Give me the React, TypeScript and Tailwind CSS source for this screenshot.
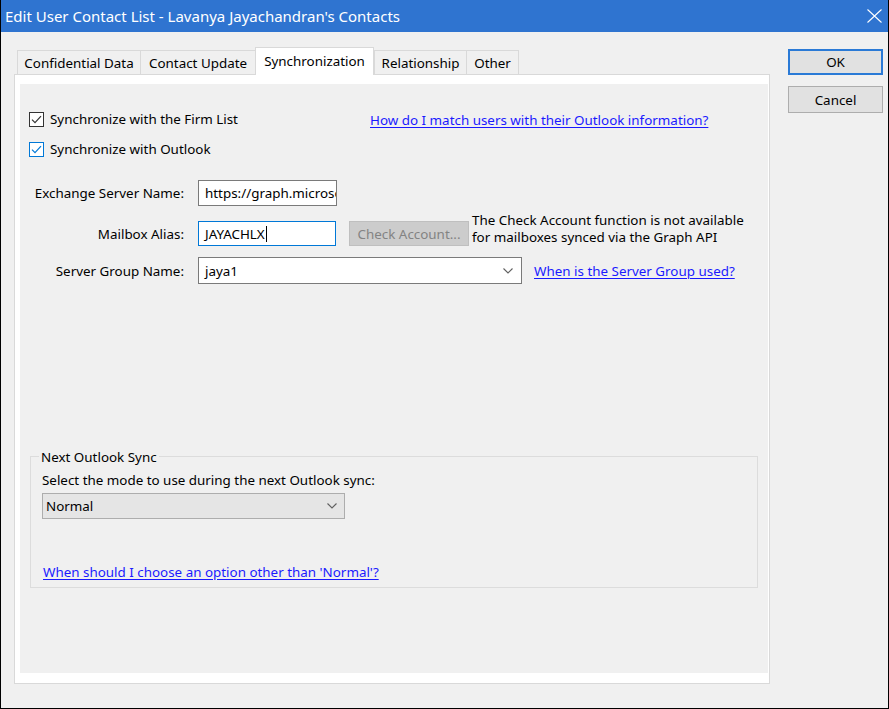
const tabs = [
  { label: 'Confidential Data', className: 'w-[123px]' },
  { label: 'Contact Update', className: 'w-[115px]' },
  { label: 'Synchronization', className: 'w-[119px]', active: true },
  { label: 'Relationship', className: 'w-[92px]' },
  { label: 'Other', className: 'w-[53px] border-r' },
]

function CheckBox({ focused }: { focused?: boolean }) {
  return (
    <div
      className={
        focused
          ? 'flex h-[15px] w-[15px] items-center justify-center border border-[#0078d7] bg-white'
          : 'flex h-[15px] w-[15px] items-center justify-center border border-[#333333] bg-white'
      }
    >
      <svg viewBox="0 0 13 13" className="h-[13px] w-[13px]">
        <path
          d="M2 6.6 L5 9.6 L11 3.2"
          fill="none"
          stroke={focused ? '#0078d7' : '#333333'}
          strokeWidth="1.2"
        />
      </svg>
    </div>
  )
}

function Chevron() {
  return (
    <svg viewBox="0 0 10 6" className="h-[6px] w-[10px]">
      <polyline points="0.5,0.5 5,5 9.5,0.5" fill="none" stroke="#606060" strokeWidth="1.1" />
    </svg>
  )
}

function HelpLink({ children, className = '' }: { children: React.ReactNode; className?: string }) {
  return <a href="#" className={'text-[#1a1aff] underline underline-offset-2 ' + className}>{children}</a>
}

export default function App() {
  return (
    <div className="flex h-[709px] w-[889px] flex-col border-x border-b border-black bg-[#f0f0f0] font-['Noto_Sans',sans-serif] text-[13.4px] leading-[20px] text-black">
      {/* Title bar */}
      <div className="flex h-[32px] shrink-0 items-center justify-between bg-[#2f74d0] pl-[4px] pr-[6px]">
        <span className="text-[15px] text-white">Edit User Contact List - Lavanya Jayachandran's Contacts</span>
        <svg viewBox="0 0 15 14" className="h-[14px] w-[15px]">
          <path d="M0.5 0.5 L14.5 13.5 M14.5 0.5 L0.5 13.5" stroke="white" strokeWidth="1.1" />
        </svg>
      </div>

      <div className="flex items-start pl-[13px] pt-[15px]">
        {/* Tab control */}
        <div className="flex flex-col">
          <div className="relative z-10 -mb-px flex h-[28px] items-end pl-[3px]">
            {tabs.map((tab) =>
              tab.active ? (
                <div
                  key={tab.label}
                  className={'flex h-[28px] items-start justify-center border-x border-t border-[#d9d9d9] bg-white pt-[3px] ' + tab.className}
                >
                  {tab.label}
                </div>
              ) : (
                <div
                  key={tab.label}
                  className={'flex h-[25px] items-center justify-center border-y border-l border-[#d9d9d9] bg-[#f0f0f0] ' + tab.className}
                >
                  {tab.label}
                </div>
              ),
            )}
          </div>

          <div className="flex h-[610px] w-[756px] border border-[#d9d9d9] bg-white pb-[10px] pl-[5px] pr-[1px] pt-[9px]">
            <div className="flex flex-1 flex-col bg-[#f0f0f0]">
              <div className="mt-[25px] flex h-[20px] items-center pl-[9px]">
                <div className="flex w-[341px] items-center">
                  <CheckBox />
                  <span className="ml-[6px]">Synchronize with the Firm List</span>
                </div>
                <HelpLink className="pt-[2px]">How do I match users with their Outlook information?</HelpLink>
              </div>
              <div className="mt-[10px] flex h-[20px] items-center pl-[9px]">
                <CheckBox focused />
                <span className="ml-[6px]">Synchronize with Outlook</span>
              </div>

              <div className="mt-[21px] flex h-[26px] items-center whitespace-nowrap pl-[9px]">
                <span className="w-[155px] text-right">Exchange Server Name:</span>
                <div className="ml-[14px] flex h-[26px] w-[139px] items-center overflow-hidden border border-[#7a7a7a] bg-white pl-[6px]">
                  https://graph.microsoft.com
                </div>
              </div>

              <div className="mt-[15px] flex h-[25px] items-center whitespace-nowrap pl-[9px]">
                <span className="w-[155px] text-right">Mailbox Alias:</span>
                <div className="ml-[14px] flex h-[25px] w-[138px] items-center border border-[#0078d7] bg-white pl-[6px]">
                  JAYACHLX
                  <span className="ml-px h-[16px] w-px bg-black" />
                </div>
                <div className="ml-[13px] flex h-[25px] w-[120px] items-center justify-center border border-[#bfbfbf] bg-[#cccccc] text-[#838383]">
                  Check Account...
                </div>
                <div className="-mt-[9px] ml-[3px] self-start leading-[17px]">
                  The Check Account function is not available
                  <br />
                  for mailboxes synced via the Graph API
                </div>
              </div>

              <div className="mt-[11px] flex h-[27px] items-center whitespace-nowrap pl-[9px]">
                <span className="w-[155px] text-right">Server Group Name:</span>
                <div className="ml-[14px] flex h-[27px] w-[324px] items-center justify-between border border-[#7a7a7a] bg-white pl-[6px] pr-[8px]">
                  <span>jaya1</span>
                  <Chevron />
                </div>
                <HelpLink className="ml-[12px]">When is the Server Group used?</HelpLink>
              </div>

              {/* Next Outlook Sync group */}
              <div className="mx-[10px] mt-[172px] h-[132px] border border-[#dcdcdc]">
                <div className="-mt-[9px] ml-[8px] w-fit bg-[#f0f0f0] px-[2px] leading-[18px]">Next Outlook Sync</div>
                <div className="mt-[5px] pl-[11px] leading-[18px]">Select the mode to use during the next Outlook sync:</div>
                <div className="ml-[11px] mt-[4px] flex h-[26px] w-[303px] items-center justify-between border border-[#adadad] bg-[#e5e5e5] pl-[3px] pr-[7px]">
                  <span>Normal</span>
                  <Chevron />
                </div>
                <div className="ml-[12px] mt-[44px] leading-[18px]">
                  <HelpLink>When should I choose an option other than 'Normal'?</HelpLink>
                </div>
              </div>
            </div>
          </div>
        </div>

        {/* Buttons */}
        <div className="ml-[18px] mt-[2px] flex flex-col">
          <button className="h-[26px] w-[95px] border-2 border-[#2a7ad6] bg-[#e1e1e1]">OK</button>
          <button className="mt-[11px] h-[27px] w-[95px] border border-[#adadad] bg-[#e1e1e1]">Cancel</button>
        </div>
      </div>
    </div>
  )
}
